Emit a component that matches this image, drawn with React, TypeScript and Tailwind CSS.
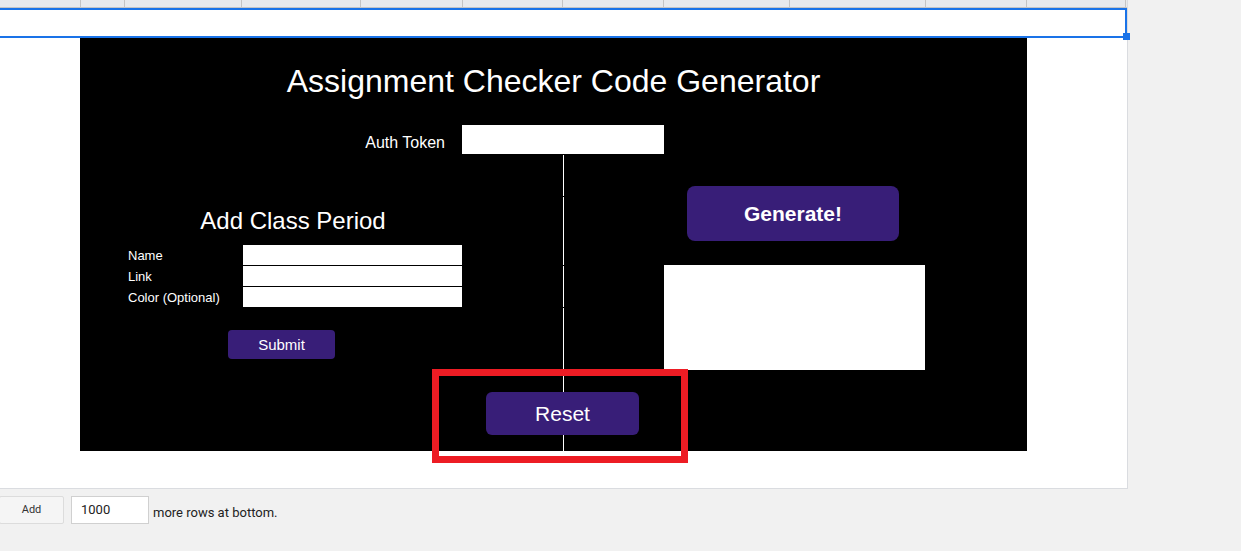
import React from 'react'

const headerCols = [
  'w-[81px]',
  'w-[44px]',
  'w-[117px]',
  'w-[119px]',
  'w-[102px]',
  'w-[100px]',
  'w-[101px]',
  'w-[126px]',
  'w-[136px]',
  'w-[101px]',
  'w-[99px]',
]

const classFields = ['Name', 'Link', 'Color (Optional)']

export default function App() {
  return (
    <div className="relative w-[1241px] h-[551px] overflow-hidden bg-[#f1f1f1] font-['Liberation_Sans',Arial,sans-serif]">
      <div className="flex h-[488px]">
        {/* Sheet */}
        <div className="w-[1128px] flex flex-col bg-white border-r border-[#dadce0]">
          {/* Column header strip */}
          <div className="flex h-[8px] bg-[#e8eaed] border-b border-[#c4c4c4]">
            {headerCols.map((w, i) => (
              <div key={i} className={`${w} h-full border-r border-[#c4c4c4]`} />
            ))}
          </div>

          {/* Selected row */}
          <div className="relative h-[30px] border-y-2 border-r-2 border-[#1a73e8]">
            <div className="absolute -right-[5px] -bottom-[4px] w-[7px] h-[7px] bg-[#1a73e8]" />
          </div>

          {/* Sheet body with the drawing */}
          <div className="flex-1 pl-[80px]">
            <div className="relative w-[947px] h-[413px] bg-black text-white">
              {/* divider line */}
              <div className="absolute left-[483px] top-[117px] bottom-0 w-px flex flex-col">
                <div className="h-[41px] bg-white" />
                <div className="mt-px h-[68px] bg-white" />
                <div className="mt-px h-[41px] bg-white" />
                <div className="mt-px flex-1 bg-white" />
              </div>

              <h1 className="pt-[25px] text-[32px] leading-[37px] text-center">
                Assignment Checker Code Generator
              </h1>

              {/* Auth token */}
              <div className="mt-[25px] flex items-center h-[29px]">
                <span className="w-[365px] pt-[6px] text-right text-[16px] leading-[18px]">Auth Token</span>
                <div className="ml-[17px] w-[202px] h-[29px] bg-white" />
              </div>

              <div className="flex h-[216px]">
                {/* Add class period */}
                <div className="w-[483px] pt-[53px]">
                  <h2 className="w-[426px] text-center text-[24px] leading-[28px]">Add Class Period</h2>
                  <div className="mt-[10px] flex flex-col gap-px">
                    {classFields.map((label) => (
                      <div key={label} className="flex items-center h-[20px]">
                        <span className="pl-[48px] w-[163px] text-[13px] leading-[15px]">{label}</span>
                        <div className="w-[219px] h-[20px] bg-white" />
                      </div>
                    ))}
                  </div>
                  <button className="mt-[23px] ml-[148px] w-[107px] h-[29px] pt-[2px] rounded-[4px] bg-[#381e78] text-[15px] text-white flex items-center justify-center">
                    Submit
                  </button>
                </div>

                {/* Generate */}
                <div className="pt-[32px]">
                  <button className="ml-[124px] w-[212px] h-[55px] rounded-[8px] bg-[#381e78] text-[21px] font-bold text-white flex items-center justify-center">
                    Generate!
                  </button>
                  <div className="mt-[24px] ml-[101px] w-[261px] h-[105px] bg-white" />
                </div>
              </div>

              <button className="relative mt-[22px] ml-[406px] w-[153px] h-[43px] rounded-[6px] bg-[#381e78] text-[21px] text-white flex items-center justify-center">
                Reset
              </button>
            </div>
          </div>
        </div>
      </div>

      {/* Bottom bar */}
      <div className="w-[1128px] border-t border-[#dadce0] flex items-center pt-[7px] font-['Roboto',Arial,sans-serif]">
        <button className="-ml-px w-[65px] h-[28px] bg-[#f5f5f5] border border-[#dcdcdc] rounded-[2px] text-[11px] text-[#333]">
          Add
        </button>
        <div className="ml-[7px] w-[78px] h-[28px] bg-white border border-[#d0d0d0] pl-[9px] flex items-center text-[13px] text-[#222]">
          1000
        </div>
        <span className="ml-[4px] pt-[5px] text-[13px] text-[#222]">more rows at bottom.</span>
      </div>

      {/* Annotation */}
      <div className="absolute left-[432px] top-[369px] w-[256px] h-[94px] border-[7px] border-[#ed1c24]" />
    </div>
  )
}
